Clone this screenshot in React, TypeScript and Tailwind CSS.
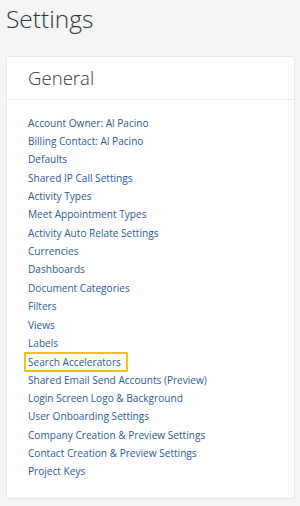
import React from "react";

const links = [
  "Account Owner: Al Pacino",
  "Billing Contact: Al Pacino",
  "Defaults",
  "Shared IP Call Settings",
  "Activity Types",
  "Meet Appointment Types",
  "Activity Auto Relate Settings",
  "Currencies",
  "Dashboards",
  "Document Categories",
  "Filters",
  "Views",
  "Labels",
  "Search Accelerators",
  "Shared Email Send Accounts (Preview)",
  "Login Screen Logo & Background",
  "User Onboarding Settings",
  "Company Creation & Preview Settings",
  "Contact Creation & Preview Settings",
  "Project Keys",
];

export default function App() {
  return (
    <div
      className="w-[300px] h-[506px] bg-[#f4f5f7] overflow-hidden"
      style={{ fontFamily: '"Open Sans", sans-serif' }}
    >
      <h1 className="pl-[6px] pt-[2px] h-[56px] text-[24.5px] font-light text-[#333333] leading-[33px]">
        Settings
      </h1>
      <div className="mx-[6px] w-[289px] h-[443px] bg-white border border-[#e6e8eb] rounded-[3px]">
        <div className="h-[43px] border-b border-[#eceef0] pl-[21px] pt-[7px] text-[18.6px] font-light text-[#333333] leading-[28px]">
          General
        </div>
        <ul className="pt-[14px] pl-[21px] flex flex-col">
          {links.map((l) => (
            <li key={l} className="h-[18.37px] flex items-center">
              {l === "Search Accelerators" ? (
                <span className="-ml-[4px] pl-[2px] pr-[5px] h-[20px] mt-[1px] flex items-center border-2 border-[#f3c221] text-[10.1px] text-[#2c5a97]">
                  {l}
                </span>
              ) : (
                <span className="text-[10.1px] text-[#2c5a97]">{l}</span>
              )}
            </li>
          ))}
        </ul>
      </div>
    </div>
  );
}
